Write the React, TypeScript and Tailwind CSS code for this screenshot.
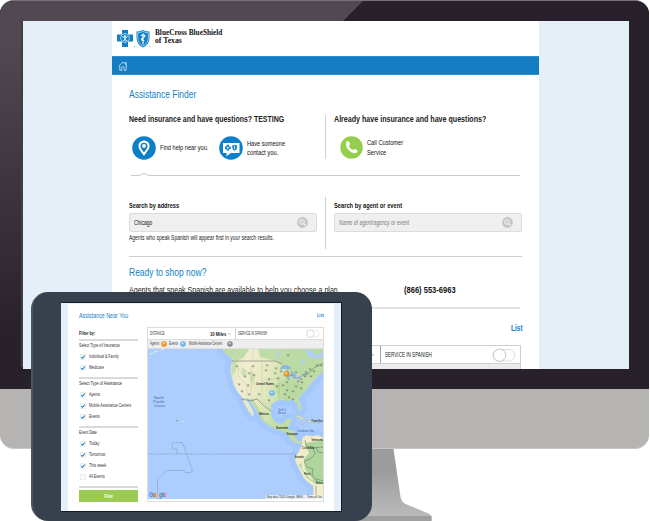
import { useLayoutEffect, useRef, useState } from "react";
import type { ReactNode } from "react";

/* Condensed text: squeezes a line horizontally so that it takes the given width. */
function Fit({ w, className = "", children }: { w: number; className?: string; children: string }) {
  const ref = useRef<HTMLSpanElement>(null);
  const [k, setK] = useState(1);
  useLayoutEffect(() => {
    if (ref.current) setK(w / ref.current.offsetWidth);
  }, [w, children]);
  return (
    <span className={"block shrink-0 whitespace-nowrap " + className} style={{ width: w }}>
      <span ref={ref} className="block w-max origin-left" style={{ transform: `scaleX(${k})` }}>
        {children}
      </span>
    </span>
  );
}

/* The same for a label on the map. */
function MapText({ x, y, w, children }: { x: number; y: number; w: number; children: ReactNode }) {
  const ref = useRef<SVGTextElement>(null);
  const [k, setK] = useState(0.7);
  useLayoutEffect(() => {
    if (ref.current) setK(w / ref.current.getComputedTextLength());
  }, [w]);
  return (
    <text ref={ref} transform={`translate(${x} ${y}) scale(${k} 1)`}>
      {children}
    </text>
  );
}

function Crosses() {
  return (
    <svg className="h-5 w-9 shrink-0" viewBox="0 0 36 20">
      <path d="M6 1h6v4.500h5v7h-5V18H6v-5.500H1v-7h5z" fill="#1180c6" />
      <circle cx="9" cy="9" r="4.300" fill="#1180c6" stroke="#cfe6f6" strokeWidth=".8" />
      <circle cx="9" cy="7.400" r="1.200" fill="#e8f3fb" />
      <path d="M9 8.500v4M6.300 7.500l2.700 2 2.700-2M7 12l2-2 2 2" stroke="#e8f3fb" strokeWidth=".9" fill="none" />
      <path d="M20.500 2.500q3.500 0 6.500-1.500 3 1.500 6.500 1.500v6q0 7-6.500 10-6.500-3-6.500-10z" fill="#1180c6" />
      <path d="M21.700 3.700q3 0 5.300-1.300 2.300 1.300 5.300 1.300v5q0 5.600-5.300 8.300-5.300-2.700-5.300-8.300z" fill="none" stroke="#cfe6f6" strokeWidth=".7" />
      <path d="M27 4.500v11M25 6.800q2-2 4-.2-.6 1.800-2 2.200-1.600.5-1.500 1.800.8 1.300 2.800.6" stroke="#fff" strokeWidth="1.100" fill="none" />
      <circle cx="18.300" cy="17.300" r=".6" fill="#6bb0dc" />
      <circle cx="34" cy="17.300" r=".6" fill="#6bb0dc" />
    </svg>
  );
}

function HomeIcon() {
  return (
    <svg className="h-[10px] w-[10px]" viewBox="0 0 10 10" fill="none" stroke="#c3ddf0" strokeWidth=".9">
      <path d="M.7 5.200 5 1l4.300 4.200M7.200 2.700V1.300h1v2.500M1.800 5v4.300h2V6.800a1.200 1.200 0 0 1 2.400 0v2.500h2V5" />
    </svg>
  );
}

function PinIcon() {
  return (
    <svg className="h-6 w-6 shrink-0" viewBox="0 0 24 24">
      <circle cx="12" cy="12" r="11.800" fill="#0c7fca" />
      <path d="M12 20C10 16.500 6.400 13.500 6.400 10a5.600 5.600 0 0 1 11.200 0c0 3.500-3.600 6.500-5.600 10z" fill="#fff" />
      <path d="M12 16.500C10.800 14.500 8.500 12.500 8.500 10.200a3.500 3.500 0 0 1 7 0c0 2.300-2.300 4.300-3.500 6.300z" fill="#0c7fca" />
      <circle cx="12" cy="10" r="1.900" fill="#fff" />
    </svg>
  );
}

function ChatIcon() {
  return (
    <svg className="h-6 w-6 shrink-0" viewBox="0 0 24 24">
      <circle cx="12" cy="12" r="11.800" fill="#0c7fca" />
      <path d="M4 7h16.500v10H12l-4.500 3.300V17H4z" fill="#fff" />
      <path d="M7.500 8.800h2.600v1.600h1.600v2.600h-1.600v1.600H7.500V13H6v-2.600h1.500z" fill="#0c7fca" />
      <circle cx="8.800" cy="11.700" r="1" fill="#fff" />
      <path d="M13.300 9.200q1.400 0 2.400-.5 1 .5 2.400.5v2.300q0 2.200-2.400 3.300-2.400-1.100-2.400-3.300z" fill="#0c7fca" />
      <path d="M15.700 9.800v3.500" stroke="#fff" strokeWidth=".9" />
    </svg>
  );
}

function PhoneIcon() {
  return (
    <svg className="h-[23px] w-[23px] shrink-0" viewBox="0 0 23 23">
      <circle cx="11.500" cy="11.500" r="11.200" fill="#97cd4c" />
      <path d="M6.200 6.200c.9-1.200 2-1.500 2.600-.6l1.200 2c.4.900-.9 1.500-1 2.300.5 1.700 2 3.300 3.900 4 .8 0 1.500-1.400 2.400-.9l1.900 1.300c.8.700.4 1.800-.9 2.600-1.700 1-5-.2-7.500-2.700S5.200 8 6.200 6.200z" fill="#fff" />
    </svg>
  );
}

function SearchIcon() {
  return (
    <svg className="h-[11px] w-[11px] shrink-0" viewBox="0 0 11 11">
      <circle cx="5.500" cy="5.500" r="5.400" fill="#c6c6c6" />
      <circle cx="5" cy="4.900" r="2.300" fill="none" stroke="#f6f6f6" strokeWidth="1" />
      <path d="m6.700 6.700 2 2" stroke="#f6f6f6" strokeWidth="1.200" />
      <circle cx="5" cy="4.900" r=".6" fill="#f0f0f0" />
    </svg>
  );
}

function SearchBox({ title, value, tone, tw, vw, children }: { title: string; value: string; tone: string; tw: number; vw: number; children?: ReactNode }) {
  return (
    <div className="w-[188px]">
      <div className="flex h-[14px] items-center">
        <Fit w={tw} className="text-[8px] font-bold text-[#151515]">{title}</Fit>
      </div>
      <div className="flex h-[19px] items-center justify-between rounded-[2px] border border-[#dcdcdc] bg-[#efefef] pr-2 pl-1">
        <Fit w={vw} className={"text-[7.200px] " + tone}>{value}</Fit>
        <SearchIcon />
      </div>
      {children}
    </div>
  );
}

function FinderPage() {
  return (
    <div className="h-[348px] w-[427px] overflow-hidden bg-white text-[#222]">
      <header className="flex h-[35px] items-start pt-2 pl-1">
        <Crosses />
        <div className="ml-[3px] font-['Liberation_Serif',serif] text-[8px] leading-[8px] font-bold text-[#111]">
          <Fit w={67.500}>BlueCross BlueShield</Fit>
          <Fit w={27}>of Texas</Fit>
        </div>
      </header>
      <nav className="flex h-[19px] items-center border-y border-[#2d8dd0] bg-[#147dc1] pl-[6px]">
        <HomeIcon />
      </nav>
      <main className="px-[17px]">
        <div className="flex h-[38px] items-center">
          <Fit w={67} className="text-[11px] text-[#1583c6]">Assistance Finder</Fit>
        </div>
        <section className="flex h-[62px] pt-[2px]">
          <div className="h-[44px] w-[196.500px] border-r border-[#d0d0d0]">
            <div className="flex h-[10px] items-center">
              <Fit w={155} className="text-[9.300px] font-bold text-[#222]">Need insurance and have questions? TESTING</Fit>
            </div>
            <div className="mt-[11px] flex items-center pl-[3px]">
              <PinIcon />
              <Fit w={48} className="ml-1 text-[7.300px] text-[#111]">Find help near you.</Fit>
              <div className="ml-[11px] flex items-center">
                <ChatIcon />
                <div className="ml-[4px] text-[7.300px] leading-[9.500px] text-[#111]">
                  <Fit w={38}>Have someone</Fit>
                  <Fit w={31}>contact you.</Fit>
                </div>
              </div>
            </div>
          </div>
          <div className="pl-[8px]">
            <div className="flex h-[10px] items-center">
              <Fit w={152} className="text-[9.300px] font-bold text-[#222]">Already have insurance and have questions?</Fit>
            </div>
            <div className="mt-[11px] flex items-center pl-[6px]">
              <PhoneIcon />
              <div className="ml-[4px] text-[7.300px] leading-[9.500px] text-[#111]">
                <Fit w={36}>Call Customer</Fit>
                <Fit w={19}>Service</Fit>
              </div>
            </div>
          </div>
        </section>
        <svg className="mt-[-4px] h-[6px] w-[392px]" viewBox="0 0 392 6" fill="none" stroke="#c9c9c9">
          <path d="M2 4.500h8.500L15 2l4.500 2.500H391" />
        </svg>
        <section className="mt-[20px] flex h-[52px] w-[393px]">
          <div className="w-[196.500px] border-r border-[#d0d0d0] pt-[2px]">
            <SearchBox title="Search by address" value="Chicago" tone="text-[#111]" tw={50} vw={18}>
              <div className="flex h-[12px] items-center">
                <Fit w={145} className="text-[6.400px] text-[#222]">Agents who speak Spanish will appear first in your search results.</Fit>
              </div>
            </SearchBox>
          </div>
          <div className="pt-[2px] pl-[8px]">
            <SearchBox title="Search by agent or event" value="Name of agent/agency or event" tone="text-[#808080]" tw={68} vw={70} />
          </div>
        </section>
        <div className="mt-[7px] h-px bg-[#cfcfcf]" />
        <div className="flex h-[30px] items-center">
          <Fit w={77} className="text-[10.800px] text-[#0d83c9]">Ready to shop now?</Fit>
        </div>
        <div className="mt-[-3px] flex h-[12px] items-center">
          <Fit w={209} className="text-[9px] text-[#222]">Agents that speak Spanish are available to help you choose a plan</Fit>
          <Fit w={52} className="ml-[66px] text-[9px] font-bold text-[#151515]">(866) 553-6963</Fit>
        </div>
        <div className="mt-[11px] mr-[2px] h-[2px] bg-[#e2e2e2]" />
        <div className="flex h-[36px] items-center justify-end">
          <Fit w={11.500} className="pt-[2px] text-[8.500px] font-bold text-[#0d83c9]">List</Fit>
        </div>
        <div className="mr-px flex h-[19px] border border-[#cfcfcf]">
          <div className="flex w-[251px] items-center justify-end border-r border-[#a5a5a5] px-[6px]">
            <svg className="h-1 w-[5px]" viewBox="0 0 5 4"><path d="m.5 1 2 2 2-2" fill="none" stroke="#888" /></svg>
          </div>
          <div className="flex grow items-center justify-between pr-1 pl-[4px]">
            <Fit w={47} className="text-[7px] text-[#222]">SERVICE IN SPANISH</Fit>
            <Toggle className="h-[14px] w-6" />
          </div>
        </div>
        <div className="mr-px h-2 border-x border-[#cfcfcf] bg-[#ebebeb]" />
      </main>
    </div>
  );
}

function Toggle({ className }: { className: string }) {
  return (
    <svg className={className} viewBox="0 0 24 14" fill="#fff">
      <rect x="1" y="1.500" width="22" height="11.500" rx="5.750" stroke="#dedede" />
      <circle cx="7.500" cy="7.200" r="6.200" stroke="#bdbdbd" strokeWidth=".9" />
    </svg>
  );
}

function Rule() {
  return <div className="h-[2px] bg-[#dadada]" />;
}

function Check({ label, w, on = true }: { label: string; w: number; on?: boolean }) {
  return (
    <div className="flex h-[11px] items-center pl-[1px]">
      <svg className="h-[6px] w-[6px] shrink-0" viewBox="0 0 6 6">
        <rect x=".3" y=".3" width="5.400" height="5.400" rx=".6" fill="#f7f9fb" stroke="#d5dde3" strokeWidth=".5" />
        {on && <path d="M1.300 3.100 2.500 4.300 4.900 1.500" fill="none" stroke="#1c7cc0" strokeWidth="1.100" />}
      </svg>
      <Fit w={w} className="ml-[3px] text-[5.800px] text-[#333]">{label}</Fit>
    </div>
  );
}

function GroupTitle({ label, w }: { label: string; w: number }) {
  return (
    <div className="flex h-[10px] items-center">
      <Fit w={w} className="text-[5.800px] text-[#2b2b2b]">{label}</Fit>
    </div>
  );
}

function Filters() {
  return (
    <aside className="w-[59px] shrink-0">
      <div className="flex h-[12px] items-center">
        <Fit w={16} className="text-[6px] font-bold text-[#222]">Filter by:</Fit>
      </div>
      <Rule />
      <GroupTitle label="Select Type of Insurance" w={41} />
      <Check label="Individual & Family" w={30} />
      <Check label="Medicare" w={15} />
      <div className="h-1" />
      <Rule />
      <GroupTitle label="Select Type of Assistance" w={43} />
      <Check label="Agents" w={11} />
      <Check label="Mobile Assistance Centers" w={42} />
      <Check label="Events" w={11} />
      <div className="h-1" />
      <Rule />
      <GroupTitle label="Event Date" w={18} />
      <Check label="Today" w={10} />
      <Check label="Tomorrow" w={16} />
      <Check label="This week" w={17} />
      <Check label="All Events" w={16} on={false} />
      <div className="h-1" />
      <Rule />
      <button className="mt-[2px] flex h-[12px] w-[59px] items-center justify-center bg-[#9ccb54]">
        <Fit w={9} className="text-[6px] font-bold text-white">Filter</Fit>
      </button>
    </aside>
  );
}

const towns: [number, number][] = [
  [89, 17], [105, 17], [119, 16], [128, 19], [97, 27], [106, 26], [118, 21], [127, 24], [91, 35], [94, 42], [101, 45], [111, 45],
  [121, 30], [130, 29], [133, 22], [139, 33], [143, 26], [148, 23], [153, 30], [157, 27], [150, 32], [154, 33], [148, 37], [153, 39],
  [145, 42], [135, 36], [137, 45], [141, 48], [129, 37], [145, 50], [121, 51], [100, 36], [140, 6], [158, 23], [162, 20], [101, 24],
  [166, 22], [169, 16], [173, 16], [139, 41], [163, 27],
];
const places: [string, number, number, number][] = [
  ["United States", 108, 35.500, 18], ["México", 111, 66, 10], ["Guatemala", 128, 79.500, 12], ["Nicaragua", 138.500, 85.500, 11],
  ["Puerto Rico", 163.500, 72.500, 11.500], ["Venezuela", 163.500, 92, 11.500], ["Colombia", 154, 100, 12], ["Ecuador", 147, 108.500, 9],
  ["Perú", 156, 126, 6.500], ["Bolivia", 168, 134.500, 7],
];
const north =
  "M74 0l4 5 3 2 4 5-2 4-.5 8 1.500 5 2 7 3 6 5 6 2 6 4 7 4 6 2-1-1-4-4-7-3-6 3 1 6 9 4 6 3 6 6 5 8 4 9 3 4 4 2 4 5 3 5 1 4-3-3 0-4 0-3-3 0-7-6-1-1-2 2-5 2-4-5 0-3 4-4 1-5-2-4-7 0-10 5-4 6-1 6 1 4-1 5 3 2 8 2-1 0-6-3-5 4-5 6-6 5-7 6-6 11-10V0z";
const south = "M154 89l4-3 6 1 6-1 7 3v61h-12l0-13-8-6-4-7-4-8-2-4 1-6 3-4 3-7z";

function MapView() {
  return (
    <svg className="block h-[150px] w-[175px]" viewBox="0 0 175 150" fontFamily="'Liberation Sans', sans-serif">
      <defs>
        <linearGradient id="land" x1="0" y1="0" x2="1" y2=".3">
          <stop offset=".1" stopColor="#d4e3b4" />
          <stop offset=".3" stopColor="#f1ecd0" />
          <stop offset=".5" stopColor="#e6e9c0" />
          <stop offset=".7" stopColor="#c2dda8" />
        </linearGradient>
        <clipPath id="north"><path d={north} /></clipPath>
      </defs>
      <rect width="176" height="150" fill="#accefe" />
      <g fill="none" stroke="#8fb9fa" strokeLinejoin="round" opacity=".28">
        <path d={north + south} strokeWidth="11" />
        <path d={north + south} strokeWidth="5" />
      </g>
      <g clipPath="url(#north)">
        <rect x="65" width="115" height="100" fill="url(#land)" />
        <path d="M73 0h28l-5 8-7 4-5-2zM110 0h70v23l-18 5-20-6-14-10-16-4z" fill="#b8dba2" opacity=".85" />
        <path d="M84 12l5 1-1 9-5 6zM94 18l5 4-2 7-4-4zM126 36l14-7 12 4 6 7-13 13-14-4zM103 22l4 3-1 12-4-7z" fill="#b5d89d" opacity=".6" />
        <path d="M103 50l6 9 7 14 9 5M128 78l10 5 9 8M136 70v8" stroke="#bddb9f" strokeWidth="2.500" fill="none" />
      </g>
      <path d="M134 17q5-2 9 2l-4 1q-4-1-7 0zM139 21l2 2v8l-2-2zM143 22l5 4-2 4-2-4zM147 29l7-2-3 2.500zM154 26l6-2-3 2z" fill="#8fb5ee" stroke="#7fa9e2" strokeWidth=".6" />
      <path d="M128 0l3 5-2 5M155 0q8 1 14 6l-2 4-7-3-2-4zM168 6l8-3v4l-6 3zM152 11l6 2-3 2zM142 0l5 4M113 2l3 4M82 3l3 2" fill="#b3d1f2" stroke="#a9caec" strokeWidth=".5" />
      <path d="M94 49l9 2 6-2 8 6 5 5M105 0v12M91 19l-1 8 9 10v8M103 18v30M115 30h18M114 13v35M131 29v22" fill="none" stroke="#8d988a" strokeWidth=".45" opacity=".45" />
      <path d="M84 12h43l7 3M93 50l10 2 6-2 7 7 7 5M154 26l6-1 7-7 9-4" fill="none" stroke="#707870" strokeWidth=".6" />
      <path d={south} fill="#f1edca" stroke="#9bbbe0" strokeWidth=".3" />
      <path d="M157 94l19-3v44l-8 0-9-6-8-13 5-6 5-6z" fill="#aed59c" />
      <path d="M153 112l3-2 1 10 9 12-4-2-8-10z" fill="#f1edca" />
      <path d="M157 91l1 6 7 1 2 7-5 5-6 2 3 6 6 2-1 6 5 6M163 99l13-1M168 98l2 5 6 1M168 130l8 2M168 137v13" fill="none" stroke="#737c6e" strokeWidth=".6" />
      <path d="M144 67l5-1 7 3 3 2-5-.5-6-3zM159 71.500l5 0 3 2-7 0zM152 74h4v1h-4zM169 73.500h3v1h-3z" fill="#dfe9bd" stroke="#8faacb" strokeWidth=".4" />
      <path d="M0 105h29v-5h-4.500v-6.500h10l10 28-1.500 2h-6v-2H19l-9.500 8.500V150M29 105h120" fill="none" stroke="#8291ad" strokeWidth=".65" strokeDasharray="1.500 .8" />
      <path d="M2 5l3-1M6 3l4-1M13 1l3-1M28 71l2 .5M34 72l1.500 1" stroke="#e8f0d9" strokeWidth="1.200" />
      <circle cx="29" cy="71.500" r=".8" fill="#777" />
      {towns.map(([x, y]) => (
        <path key={x + "-" + y} d={`M${x - 1.300} ${y}h2.600M${x - 0.5} ${y + 0.8}h1.500`} stroke="#68705f" strokeWidth=".65" />
      ))}
      <g fontSize="3.900" fill="#2c302c" stroke="#2c302c" strokeWidth=".1">
        {places.map(([t, x, y, w]) => (
          <MapText key={t} x={x} y={y} w={w}>{t}</MapText>
        ))}
      </g>
      <g fontSize="3.600" fill="#4669a0">
        <MapText x={6} y={50} w={10}>North</MapText>
        <MapText x={5} y={53.700} w={12}>Pacific</MapText>
        <MapText x={6} y={57.500} w={11}>Ocean</MapText>
        <MapText x={130} y={61.500} w={8}>Gulf of</MapText>
        <MapText x={130} y={65} w={8}>Mexico</MapText>
        <MapText x={149} y={82.500} w={17}>Caribbean Sea</MapText>
      </g>
      <Marker x={138.500} y={25} c="#f5961d" />
      <Marker x={124} y={44} c="#6dbdf2" />
      <g fontSize="7" fontWeight="bold">
        <MapText x={1} y={148} w={17}>
          <tspan fill="#4285f4">G</tspan><tspan fill="#ea4335">o</tspan><tspan fill="#fbbc05">o</tspan><tspan fill="#4285f4">g</tspan><tspan fill="#34a853">l</tspan><tspan fill="#ea4335">e</tspan>
        </MapText>
      </g>
      <rect x="118" y="146" width="57" height="4" fill="#f2f4f5" opacity=".8" />
      <g fontSize="3.500" fill="#333">
        <MapText x={119} y={149} w={36}>Map data ©2015 Google, INEGI</MapText>
        <MapText x={159} y={149} w={15}>Terms of Use</MapText>
      </g>
    </svg>
  );
}

function Marker({ x, y, c }: { x: number; y: number; c: string }) {
  return (
    <g>
      <circle cx={x} cy={y} r="2.700" fill={c} stroke="#666" strokeOpacity=".3" strokeWidth=".4" />
      <circle cx={x - 0.3} cy={y - 0.7} r="1" fill="#fff" opacity=".65" />
    </g>
  );
}

function Dot({ c }: { c: string }) {
  return (
    <svg className="h-[6px] w-[6px] shrink-0" viewBox="0 0 6 6">
      <Marker x={3} y={3} c={c} />
    </svg>
  );
}

function Tablet() {
  return (
    <div className="absolute top-[292px] left-[31px] h-[229px] w-[341px] overflow-hidden rounded-[17px] border-l-2 border-[#485764] bg-[#36414d] pt-[10px] pl-[28px]">
      <div className="flex h-[210px] w-[281px] justify-between border-y border-r border-[#111e2a] bg-[#e4eff8] pr-[7px] pl-[7px]">
        <div className="w-[266px] border-t border-[#edf0f2] bg-white pl-[11px] text-[#333]">
          <div className="flex h-[23px] items-center justify-between pr-[10px]">
            <Fit w={49} className="text-[7.400px] text-[#147fc2]">Assistance Near You</Fit>
            <Fit w={7} className="text-[5.500px] font-bold text-[#147fc2]">List</Fit>
          </div>
          <div className="flex gap-[9px]">
            <Filters />
            <div className="w-[177px] border border-[#dcdcdc]">
              <div className="flex h-[11px] text-[5px]">
                <div className="flex w-[88px] items-center justify-between border-r border-[#cfcfcf] pr-1 pl-[2px]">
                  <Fit w={15}>DISTANCE:</Fit>
                  <div className="flex items-center gap-[2px]">
                    <Fit w={16} className="text-[6px] font-bold text-[#222]">10 Miles</Fit>
                    <svg className="h-[2px] w-[3px]" viewBox="0 0 3 2"><path d="m.3.3 1.200 1.200L2.700.3" fill="none" stroke="#777" strokeWidth=".6" /></svg>
                  </div>
                </div>
                <div className="flex grow items-center justify-between pr-[3px] pl-[2px]">
                  <Fit w={29}>SERVICE IN SPANISH</Fit>
                  <Toggle className="h-[9px] w-[14px]" />
                </div>
              </div>
              <div className="flex h-[10px] items-center border-y border-[#dedede] bg-[#eeeeee] pl-[2px] text-[5.200px] text-[#444]">
                <Fit w={9}>Agents</Fit>
                <div className="mr-[2px] ml-[2px] flex"><Dot c="#f5961d" /></div>
                <Fit w={9}>Events</Fit>
                <div className="mr-[3px] ml-[2px] flex"><Dot c="#6dbdf2" /></div>
                <Fit w={33}>Mobile Assistance Centers</Fit>
                <div className="ml-[5px] flex"><Dot c="#8c8c96" /></div>
              </div>
              <MapView />
            </div>
          </div>
        </div>
      </div>
    </div>
  );
}

export default function App() {
  return (
    <div className="relative h-[521px] w-[650px] overflow-hidden bg-white font-['Liberation_Sans',Arial,sans-serif] leading-none">
      <div className="h-[389px] w-[649px] overflow-hidden rounded-t-[14px] border-t border-[#777078] bg-[#28202b]">
        <div className="flex h-[388px] border-b border-[#5a4859]">
          <svg className="h-[388px] w-[649px] shrink-0" viewBox="0 0 649 388">
            <defs>
              <linearGradient id="side" x1="0" y1="0" x2="0" y2="1">
                <stop offset=".1" stopColor="#514852" />
                <stop offset=".86" stopColor="#28202b" />
              </linearGradient>
            </defs>
            <rect width="649" height="388" fill="#28202b" />
            <path d="M0 0h363l-21 21H23v367H0z" fill="url(#side)" />
            <rect x="21" y="20" width="2" height="346" fill="#3b4043" />
          </svg>
          <div className="mt-[20px] ml-[-626px] flex h-[348px] w-[606px] shrink-0 bg-[#e4eff8] pl-[89px]">
            <FinderPage />
          </div>
        </div>
      </div>
      <div className="h-[60px] w-[649px] rounded-b-[14px] border-b border-[#c8c7c6] bg-[#b5b4b2]" />
      <svg className="block h-[72px] w-[650px]" viewBox="0 0 650 72">
        <defs>
          <linearGradient id="stand" x1="0" y1="0" x2="0" y2="1">
            <stop offset=".3" stopColor="#9c9c9c" />
            <stop offset=".9" stopColor="#b9b9b9" />
          </linearGradient>
        </defs>
        <path d="M255 0h138.500l7 48q1 5 5 7l22 9q4 2 4 4v4H255z" fill="url(#stand)" />
        <path d="M255 67h176.500v5H255z" fill="#9f9f9f" />
      </svg>
      <Tablet />
    </div>
  );
}
